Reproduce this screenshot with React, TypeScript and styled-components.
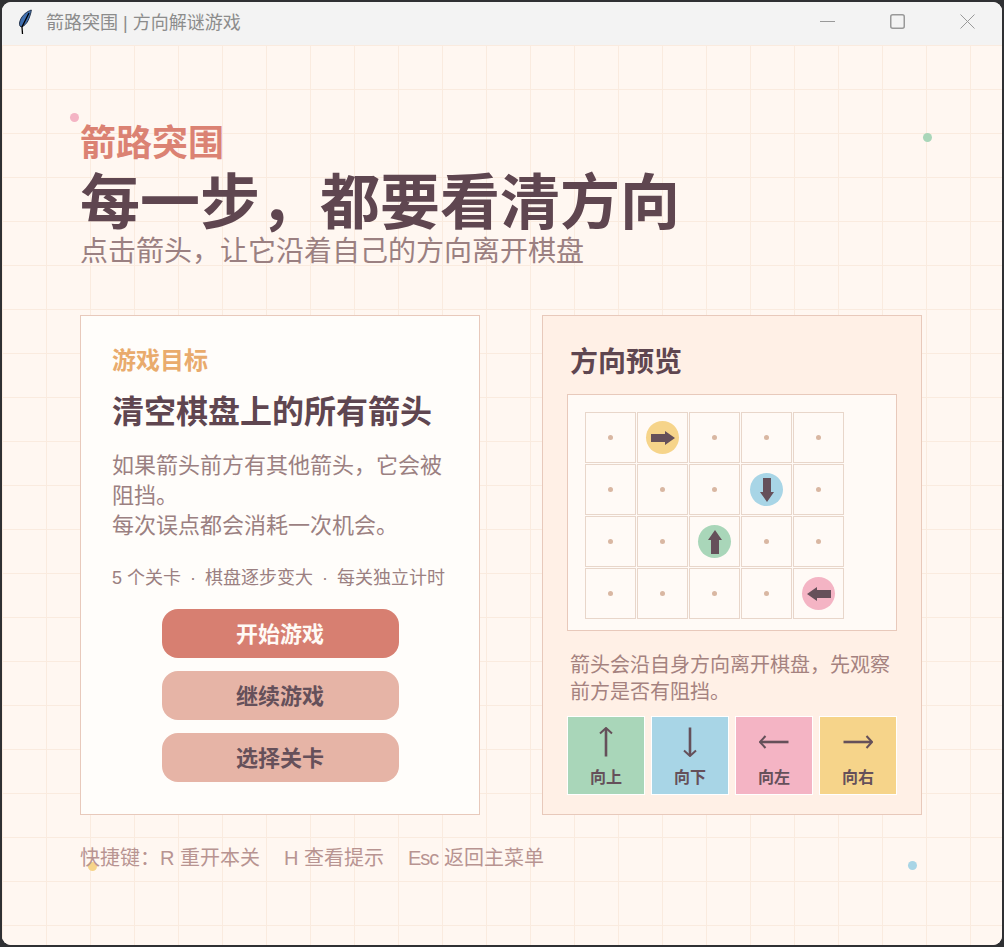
import React from 'react';
import styled, { createGlobalStyle } from 'styled-components';

type Dir = 'up' | 'down' | 'left' | 'right';

const COLORS: Record<Dir, string> = {
  up: '#a9d6b9',
  down: '#a8d5e6',
  left: '#f4b4c4',
  right: '#f6d48a',
};

const ROTATION: Record<Dir, number> = { right: 0, down: 90, left: 180, up: 270 };

// row, col -> direction, everything else is an empty cell
const BOARD: Record<string, Dir> = {
  '0-1': 'right',
  '1-3': 'down',
  '2-2': 'up',
  '3-4': 'left',
};

const LEGEND: { dir: Dir; label: string }[] = [
  { dir: 'up', label: '向上' },
  { dir: 'down', label: '向下' },
  { dir: 'left', label: '向左' },
  { dir: 'right', label: '向右' },
];

const App: React.FC = () => {
  const cells: React.ReactNode[] = [];
  for (let r = 0; r < 4; r++) {
    for (let c = 0; c < 5; c++) {
      const dir = BOARD[`${r}-${c}`];
      cells.push(
        <Cell key={`${r}-${c}`}>
          {dir ? (
            <Token $dir={dir}>
              <ArrowSvg $dir={dir} viewBox="0 0 24 14" width="24" height="14">
                <polygon points="0,3 14,3 14,0 24,7 14,14 14,11 0,11" fill="#65505a" />
              </ArrowSvg>
            </Token>
          ) : (
            <Dot />
          )}
        </Cell>
      );
    }
  }

  return (
    <>
      <GlobalStyle />
      <Window>
        <TitleBar>
          <Feather viewBox="0 0 16 26" width="16" height="26">
            <path d="M14.3 1 C10 2.5 5 6 3 12 C2 15 2.5 17 4 18 C8 17 11 13 12.5 8 C13.5 5 14.2 3 14.3 1 Z" fill="#3f6fb0" stroke="#24344c" strokeWidth="1" />
            <path d="M12 4 L5 18 L5.5 25" fill="none" stroke="#000" strokeWidth="1.3" />
          </Feather>
          <WindowTitle>箭路突围 | 方向解谜游戏</WindowTitle>
          <WindowControls>
            <ControlIcon viewBox="0 0 15 15" width="15" height="15">
              <path d="M0 7.5 H15" />
            </ControlIcon>
            <ControlIcon viewBox="0 0 15 15" width="15" height="15">
              <rect x="0.75" y="0.75" width="13.5" height="13.5" rx="2" strokeWidth="1.5" />
            </ControlIcon>
            <ControlIcon viewBox="0 0 15 15" width="15" height="15">
              <path d="M0.5 0.5 L14.5 14.5 M14.5 0.5 L0.5 14.5" />
            </ControlIcon>
          </WindowControls>
        </TitleBar>

        <Page>
          <Sparkle $color="#f4b4c4" $x={68} $y={68} />
          <Sparkle $color="#a9d6b9" $x={921} $y={88} />
          <Sparkle $color="#f6d48a" $x={86} $y={817} />
          <Sparkle $color="#a8d5e6" $x={906} $y={816} />

          <Eyebrow>箭路突围</Eyebrow>
          <Headline>每一步，都要看清方向</Headline>
          <Subtitle>点击箭头，让它沿着自己的方向离开棋盘</Subtitle>

          <Columns>
            <GoalCard>
              <GoalLabel>游戏目标</GoalLabel>
              <GoalTitle>清空棋盘上的所有箭头</GoalTitle>
              <GoalText>
                如果箭头前方有其他箭头，它会被阻挡。
                <br />
                每次误点都会消耗一次机会。
              </GoalText>
              <GoalMeta>
                5 个关卡<MetaDot>·</MetaDot>棋盘逐步变大<MetaDot>·</MetaDot>每关独立计时
              </GoalMeta>
              <Buttons>
                <MenuButton $primary>开始游戏</MenuButton>
                <MenuButton>继续游戏</MenuButton>
                <MenuButton>选择关卡</MenuButton>
              </Buttons>
            </GoalCard>

            <PreviewCard>
              <PreviewTitle>方向预览</PreviewTitle>
              <BoardPanel>
                <BoardGrid>{cells}</BoardGrid>
              </BoardPanel>
              <PreviewText>箭头会沿自身方向离开棋盘，先观察前方是否有阻挡。</PreviewText>
              <LegendRow>
                {LEGEND.map((item) => (
                  <LegendTile key={item.dir} $dir={item.dir}>
                    <LegendIcon>
                      <ArrowSvg $dir={item.dir} viewBox="0 0 30 30" width="30" height="30">
                        <path d="M0.5 15 H28" fill="none" stroke="#65505a" strokeWidth="2.6" />
                        <path d="M23.5 9 L29 15 L23.5 21" fill="none" stroke="#65505a" strokeWidth="2" />
                      </ArrowSvg>
                    </LegendIcon>
                    <LegendLabel>{item.label}</LegendLabel>
                  </LegendTile>
                ))}
              </LegendRow>
            </PreviewCard>
          </Columns>

          <Shortcuts>
            <span>快捷键：R 重开本关</span>
            <span>H 查看提示</span>
            <span>
              <EscKey>Esc</EscKey> 返回主菜单
            </span>
          </Shortcuts>
        </Page>
      </Window>
    </>
  );
};

const GlobalStyle = createGlobalStyle`
  html, body {
    margin: 0;
    padding: 0;
    background: #2f3033;
    font-family: "Liberation Sans", "Noto Sans CJK SC", sans-serif;
  }
`;

const Window = styled.div`
  position: relative;
  width: 1000px;
  height: 943px;
  margin: 2px;
  border-radius: 9px;
  overflow: hidden;
  display: flex;
  flex-direction: column;
  background: #fff7f1;
`;

const TitleBar = styled.div`
  height: 43px;
  flex: none;
  display: flex;
  align-items: center;
  padding-left: 15px;
  background: #f3f3f3;
`;

const Feather = styled.svg`
  flex: none;
  margin-bottom: 3px;
`;

const WindowTitle = styled.div`
  margin-left: 13px;
  margin-bottom: 6px;
  font-size: 18px;
  color: #8c8c8c;
`;

const WindowControls = styled.div`
  margin-left: auto;
  margin-right: 27px;
  margin-bottom: 4px;
  display: flex;
  gap: 55px;
`;

const ControlIcon = styled.svg`
  display: block;
  fill: none;
  stroke: #999;
  stroke-width: 1;
`;

const Page = styled.div`
  position: relative;
  flex: 1;
  padding: 77px 0 0 78px;
  background-color: #fff7f1;
  background-image:
    linear-gradient(to right, #faebdf 1px, transparent 1px),
    linear-gradient(to bottom, #faebdf 1px, transparent 1px);
  background-size: 44px 44px;
`;

const Sparkle = styled.i<{ $color: string; $x: number; $y: number }>`
  position: absolute;
  left: ${(p) => p.$x}px;
  top: ${(p) => p.$y}px;
  width: 9px;
  height: 9px;
  border-radius: 50%;
  background: ${(p) => p.$color};
`;

const Eyebrow = styled.div`
  position: relative;
  font-size: 36px;
  line-height: 44px;
  font-weight: 700;
  color: #db8273;
`;

const Headline = styled.h1`
  position: relative;
  margin: 4px 0 0;
  font-size: 60px;
  line-height: 68px;
  font-weight: 700;
  color: #5f4650;
`;

const Subtitle = styled.div`
  position: relative;
  margin-top: -1px;
  font-size: 28px;
  line-height: 30px;
  color: #9b8081;
`;

const Columns = styled.div`
  position: relative;
  display: grid;
  grid-template-columns: 400px 380px;
  gap: 62px;
  margin-top: 48px;
  height: 500px;
`;

const GoalCard = styled.section`
  box-sizing: border-box;
  padding: 28px 31px 0;
  background: #fffdfa;
  border: 1px solid #e8c9bb;
`;

const GoalLabel = styled.div`
  font-size: 24px;
  line-height: 34px;
  font-weight: 700;
  color: #e9ab6d;
`;

const GoalTitle = styled.h2`
  margin: 12px 0 0;
  font-size: 32px;
  line-height: 44px;
  font-weight: 700;
  color: #5f4650;
`;

const GoalText = styled.p`
  margin: 17px 0 0;
  font-size: 22px;
  line-height: 30px;
  color: #9b8081;
`;

const GoalMeta = styled.div`
  margin-top: 24px;
  font-size: 18px;
  line-height: 26px;
  color: #9b8081;
  white-space: nowrap;
`;

const MetaDot = styled.span`
  margin: 0 9px;
`;

const Buttons = styled.div`
  margin-top: 18px;
  display: flex;
  flex-direction: column;
  align-items: center;
  gap: 13px;
`;

const MenuButton = styled.button<{ $primary?: boolean }>`
  width: 237px;
  height: 49px;
  padding: 0 0 3px;
  border: none;
  border-radius: 16px;
  font-family: inherit;
  font-size: 22px;
  font-weight: 700;
  background: ${(p) => (p.$primary ? '#d77f71' : '#e6b4a6')};
  color: ${(p) => (p.$primary ? '#fffaf5' : '#65505a')};
`;

const PreviewCard = styled.section`
  box-sizing: border-box;
  padding: 28px 24px 0;
  background: #fff0e6;
  border: 1px solid #e8c9bb;
`;

const PreviewTitle = styled.h2`
  margin: 0 0 0 3px;
  font-size: 28px;
  line-height: 38px;
  font-weight: 700;
  color: #5f4650;
`;

const BoardPanel = styled.div`
  box-sizing: border-box;
  height: 237px;
  margin-top: 12px;
  padding: 17px;
  background: #fffaf6;
  border: 1px solid #e8c9bb;
`;

const BoardGrid = styled.div`
  display: grid;
  grid-template-columns: repeat(5, 51px);
  grid-auto-rows: 51px;
  gap: 1px;
`;

const Cell = styled.div`
  box-sizing: border-box;
  display: flex;
  align-items: center;
  justify-content: center;
  border: 1px solid #e8d6ca;
`;

const Dot = styled.span`
  width: 5px;
  height: 5px;
  border-radius: 50%;
  background: #d9b7a2;
`;

const Token = styled.span<{ $dir: Dir }>`
  width: 33px;
  height: 33px;
  border-radius: 50%;
  display: flex;
  align-items: center;
  justify-content: center;
  background: ${(p) => COLORS[p.$dir]};
`;

const ArrowSvg = styled.svg<{ $dir: Dir }>`
  display: block;
  transform: rotate(${(p) => ROTATION[p.$dir]}deg);
`;

const PreviewText = styled.p`
  margin: 21px 0 0 3px;
  font-size: 20px;
  line-height: 27px;
  color: #a5827f;
`;

const LegendRow = styled.div`
  margin-top: 10px;
  display: grid;
  grid-template-columns: repeat(4, 78px);
  gap: 6px;
`;

const LegendTile = styled.div<{ $dir: Dir }>`
  box-sizing: border-box;
  height: 79px;
  display: flex;
  flex-direction: column;
  align-items: center;
  border: 1px solid #fff;
  background: ${(p) => COLORS[p.$dir]};
  color: #65505a;
`;

const LegendIcon = styled.div`
  height: 49px;
  display: flex;
  align-items: center;
`;

const LegendLabel = styled.div`
  font-size: 16px;
  line-height: 24px;
  font-weight: 700;
`;

const Shortcuts = styled.div`
  position: relative;
  margin-top: 29px;
  display: flex;
  gap: 24px;
  font-size: 20px;
  line-height: 28px;
  color: #b89491;
`;

const EscKey = styled.span`
  letter-spacing: -1px;
`;

export default App;
